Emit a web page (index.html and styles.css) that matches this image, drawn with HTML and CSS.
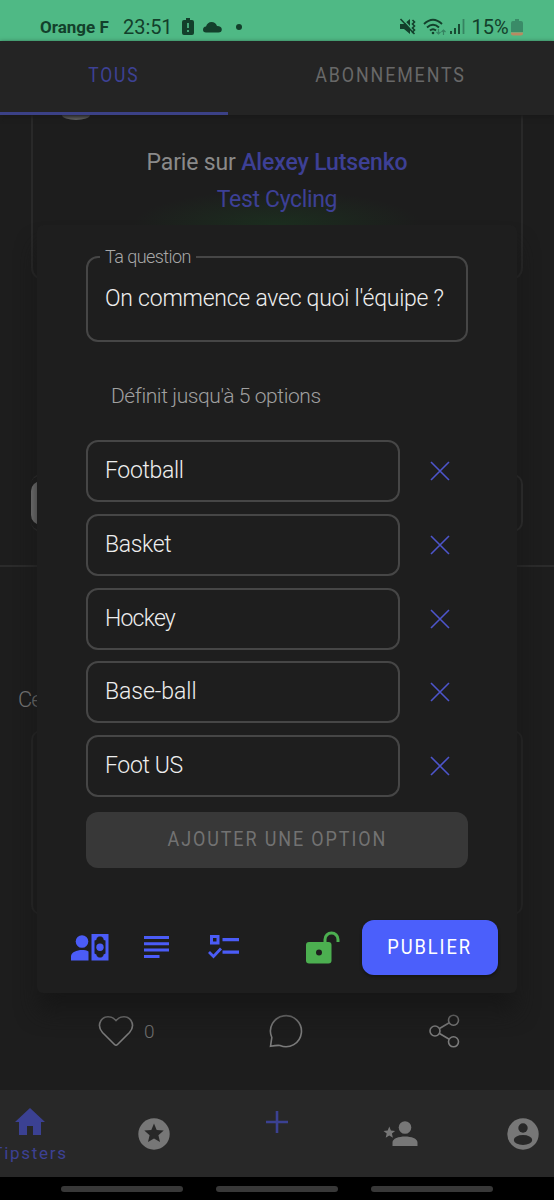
FILE: index.html
```html
<!DOCTYPE html>
<html lang="fr">
<head>
<meta charset="utf-8">
<title>Tipsters</title>
<link rel="stylesheet" href="styles.css">
</head>
<body>
<div class="phone">
  <header class="status">
    <span class="carrier">Orange F</span>
    <span class="clock">23:51</span>
    <svg class="battery-alert" width="12" height="18" viewBox="0 0 12 18"><path d="M4 0h4v2h2q2 0 2 2v11q0 2-2 2H2q-2 0-2-2V4q0-2 2-2h2z" fill="#133f2b"/><path d="M6 5v5M6 12v2" stroke="#4fb985" stroke-width="1.7"/></svg>
    <svg class="cloud" width="19" height="11" viewBox="0 0 19 11"><path d="M3 10.500Q0 10.500 0 7.800 0 5 3 4.600 4.500 0 8.500 0 12.500 0 14 4q4.800.2 4.800 3.600 0 2.900-3.300 2.900z" fill="#133f2b"/></svg>
    <i class="dot"></i>
    <svg class="mute" width="16" height="16" viewBox="0 0 16 16" fill="none" stroke="#133f2b"><path d="M0 5h4l6-5v15l-6-5H0z" fill="#133f2b" stroke="none"/><path d="M1.500-1l13 14" stroke="#4fb985" stroke-width="1.400"/><path d="M.5 0l13 14" stroke-width="1.600"/><path d="M12.500 1l2 2-2 2 2 2-2 2 2 2-2 2 2 2" stroke-width="1.600"/></svg>
    <svg class="wifi" width="23" height="17" viewBox="0 0 23 17" fill="none" stroke="#133f2b" stroke-width="1.900"><path d="M1 5q9-8.500 18 0M4 8.500q6-5.500 12 0M7 11.500q3-2.700 6 0"/><circle cx="10" cy="14" r="1.300" fill="#133f2b" stroke="none"/><path d="M15.500 10v5m-2-2l2 2 2-2M20.500 16v-5m-2 2l2-2 2 2" stroke="#368361" stroke-width="1.200"/></svg>
    <svg class="signal" width="15" height="16" viewBox="0 0 15 16" stroke="#133f2b" stroke-width="1.800"><path d="M1 12v3M5 9v6M9 5v10"/><path d="M13.500 0v15" stroke="#368361"/></svg>
    <span class="percent">15%</span>
    <svg class="battery" width="12" height="17" viewBox="0 0 12 17"><path d="M4 0h4v2h2q2 0 2 2v9H0V4q0-2 2-2h2z" fill="#3a8b68"/><path d="M0 13.500h12v1q0 2-2 2H2q-2 0-2-2z" fill="#b98a62"/></svg>
  </header>
  <nav class="tabs">
    <div class="tab active"><span>TOUS</span></div>
    <div class="tab"><span>ABONNEMENTS</span></div>
  </nav>
  <main class="feed">
    <section class="bet-card">
      <i class="avatar"></i>
      <p class="bet">Parie sur <b>Alexey Lutsenko</b></p>
      <p class="event">Test Cycling</p>
    </section>
    <div class="comment-box"><i class="thumb"></i></div>
    <section class="post">
      <p>Ce</p>
      <div class="post-card"></div>
    </section>
    <div class="reactions">
      <div class="like"><svg width="34" height="31" viewBox="0 0 34 31"><path d="M17 4.500C12-1 5 0 2 4.500-.5 8.500.5 13 3.500 16.500L15.500 28.500Q17 30 18.500 28.500L30.500 16.500C33.500 13 34.500 8.500 32 4.500 29 0 22-1 17 4.500z"/></svg><span>0</span></div>
      <svg class="comment" width="34" height="34" viewBox="0 0 34 34"><path d="M1.500 32.300L2.800 23.500A15.500 15.500 0 1 1 11 31.500Q8.500 31 1.500 32.300z"/></svg>
      <svg width="31" height="34" viewBox="0 0 31 34"><circle cx="6" cy="17" r="5"/><circle cx="24.500" cy="6.200" r="5"/><circle cx="24.500" cy="27.800" r="5"/><path d="M10.500 14.500l9.700-5.700M10.500 19.500l9.700 5.700"/></svg>
    </div>
  </main>
  <nav class="bottom-nav">
    <div class="home"><svg width="30" height="27" viewBox="0 0 30 27"><path d="M15 0L30 14h-4v13h-8v-9h-6v9H4V14H0z"/></svg><span>Tipsters</span></div>
    <svg class="star" width="32" height="32" viewBox="0 0 32 32"><circle cx="16" cy="16" r="15.700"/><path d="M16 5.500l2.700 6.500 7 .6-5.300 4.600 1.600 6.900-6-3.700-6 3.700 1.600-6.900L6.300 12.600l7-.6z" fill="#282828"/></svg>
    <svg class="plus" width="22" height="22" viewBox="0 0 22 22"><path d="M11 0v22M0 11h22" stroke="#3b4192" stroke-width="2.600"/></svg>
    <svg class="follow" width="35" height="26" viewBox="0 0 35 26"><circle cx="22" cy="6.500" r="6.300"/><path d="M9.500 25v-3.500c0-8 25-8 25 0V25zM6.300 5.500l1.600 4 4.200.4-3.200 2.700 1 4.200-3.600-2.300-3.600 2.300 1-4.200L.5 9.900l4.200-.4z"/></svg>
    <svg class="account" width="32" height="32" viewBox="0 0 32 32"><circle cx="16" cy="16" r="15.700"/><circle cx="16" cy="10" r="4.700" fill="#282828"/><ellipse cx="16" cy="22" rx="9.200" ry="5" fill="#282828"/></svg>
  </nav>
  <footer class="gestures"><i></i><i></i><i></i></footer>

  <form class="dialog">
    <fieldset class="question"><legend>Ta question</legend><p>On commence avec quoi l'équipe ?</p></fieldset>
    <p class="hint">Définit jusqu'à 5 options</p>
    <div class="options">
      <div class="option"><div class="field">Football</div><svg width="18" height="18"><path d="M0 0L18 18M18 0L0 18"/></svg></div>
      <div class="option"><div class="field">Basket</div><svg width="18" height="18"><path d="M0 0L18 18M18 0L0 18"/></svg></div>
      <div class="option"><div class="field tight">Hockey</div><svg width="18" height="18"><path d="M0 0L18 18M18 0L0 18"/></svg></div>
      <div class="option"><div class="field wide">Base-ball</div><svg width="18" height="18"><path d="M0 0L18 18M18 0L0 18"/></svg></div>
      <div class="option"><div class="field">Foot US</div><svg width="18" height="18"><path d="M0 0L18 18M18 0L0 18"/></svg></div>
    </div>
    <div class="add"><span>AJOUTER UNE OPTION</span></div>
    <div class="actions">
      <svg class="ic-bet" width="38" height="27" viewBox="0 0 38 27"><circle cx="11" cy="7.500" r="6.300"/><path d="M0 26.500v-4c0-6 12-8 17.500-5v9zM20.500 0h17v26.500h-17z"/><path d="M26 3.500q0 2.500-2.500 3v13q2.500.5 2.500 3 1.500 0 1.500 1h3q0-1 1.500-1 0-2.500 2.500-3v-13q-2.500-.5-2.500-3-1.500 0-1.500-1h-3q0 1-1.500 1z" fill="#1e1e1e"/><circle cx="29" cy="13.300" r="3.700"/></svg>
      <svg class="ic-text" width="25" height="23" viewBox="0 0 25 23"><path d="M0 0h25v3H0zM0 6.200h25v3H0zM0 12.600h25v3H0zM0 19h15.500v3H0z"/></svg>
      <svg class="ic-poll" width="31" height="24" viewBox="0 0 31 24"><path d="M2 0h9.500v9.500H2zm3 3v3.500h3.500V3zM14.500 3H31v3.200H14.500zM14.500 15.500H31v3.200H14.500z" fill-rule="evenodd"/><path d="M1 17l4.500 4.500L13 13.500" fill="none" stroke="#4b5cf7" stroke-width="2.800"/></svg>
      <svg class="ic-lock" width="34" height="33" viewBox="0 0 34 33"><rect x="0" y="11" width="25.500" height="21.500" rx="3"/><circle cx="13" cy="21.500" r="3" fill="#1e1e1e"/><path d="M19 12V8.500a6.500 6.500 0 0 1 13 0V11" fill="none" stroke="#4caf50" stroke-width="3"/></svg>
      <div class="publish"><span>PUBLIER</span></div>
    </div>
  </form>
</div>
</body>
</html>
```
FILE: styles.css
```css
* { box-sizing: border-box; }
body { margin: 0; background: #1e1e1e; font-family: Roboto, "Liberation Sans", sans-serif; font-weight: 300; color: #eee; }
p { margin: 0; white-space: nowrap; }
svg { display: block; flex: none; overflow: visible; }
.phone { position: relative; width: 554px; height: 1200px; overflow: hidden; display: flex; flex-direction: column; }

.status { height: 41px; flex: none; background: #4fb985; color: #133f2b; display: flex; align-items: center; padding: 13px 31px 0 40px; }
.carrier { font-size: 17px; font-weight: 700; width: 84px; letter-spacing: 0; }
.clock { font-size: 20px; font-weight: 400; width: 60px; letter-spacing: -.1px; }
.cloud { margin-left: 9px; }
.dot { width: 6px; height: 6px; border-radius: 50%; background: #133f2b; margin-left: 14px; }
.mute { margin-left: 158px; }
.wifi { margin-left: 7px; }
.signal { margin-left: 4px; }
.percent { font-size: 20px; font-weight: 400; margin-left: 6px; width: 40px; }

.tabs { height: 74px; flex: none; background: #242424; display: flex; box-shadow: 0 2px 5px #191919; z-index: 1; }
.tab { width: 326px; display: flex; align-items: center; justify-content: center; padding-bottom: 7px; font-size: 21px; letter-spacing: 2.2px; color: #686868; font-weight: 400; }
.tab span { transform: scaleX(.85); }
.tab.active { width: 228px; flex: none; color: #3d4194; border-bottom: 3px solid #3b4187; padding-bottom: 4px; }
.tab.active span { transform: scaleX(.83); }

.feed { height: 975px; flex: none; background: #1d1d1d; font-size: 23px; overflow: hidden; }
.bet-card { height: 165px; margin: 0 31px; border: 2px solid #292929; border-top: 0; border-radius: 0 0 12px 12px; text-align: center; background: radial-gradient(ellipse 145px 35px at 50% 110px, #1c2e1f, transparent); display: flex; flex-direction: column; }
.avatar { width: 28px; height: 5px; border-radius: 0 0 50% 50% / 0 0 100% 100%; background: #69696a; margin-left: 29px; }
.bet { margin-top: 24px; height: 37px; line-height: 37px; color: #8a8a8a; font-weight: 400; font-size: 23px; letter-spacing: -.15px; }
.bet b { font-weight: 500; color: #3d4096; }
.event { height: 37px; line-height: 37px; color: #3d4096; font-weight: 400; letter-spacing: -.35px; }
.comment-box { margin: 194px 31px 0; height: 58px; border: 2px solid #303030; border-left: 0; border-radius: 10px; display: flex; align-items: center; }
.thumb { width: 44px; height: 44px; border-radius: 10px; background: #7d7d7d; }
.post { margin-top: 33px; border-top: 2px solid #2b2b2b; padding: 118px 31px 0 18px; color: #777; font-size: 22px; line-height: 30px; letter-spacing: -1px; }
.post-card { margin: 15px 0 0 13px; height: 185px; border: 2px solid #272727; border-radius: 10px; }
.reactions { display: flex; align-items: center; height: 36px; margin-top: 98px; padding: 0 94px 0 99px; justify-content: space-between; }
.reactions svg { fill: none; stroke: #7b7b7b; stroke-width: 1.6; }
.like { display: flex; align-items: center; width: 56px; gap: 11px; font-size: 19px; color: #707070; }
.reactions .comment { margin-right: 12px; }

.bottom-nav { height: 87px; flex: none; background: #282828; fill: #777; display: flex; }
.home { width: 92px; flex: none; margin-left: -16px; padding: 18px 0 0; display: flex; flex-direction: column; align-items: center; fill: #3b4192; color: #3d4194; font-size: 17px; font-weight: 400; letter-spacing: 1.7px; gap: 8px; }
.star { margin: 28px 0 0 62px; }
.plus { margin: 21px 0 0 96px; }
.follow { margin: 31px 0 0 95px; }
.account { margin: 28px 0 0 89px; }
.gestures { height: 23px; flex: none; background: #000; display: flex; gap: 33px; padding: 9px 0 0 61px; }
.gestures i { width: 122px; height: 6px; border-radius: 3px; background: #383838; }

.dialog { position: absolute; z-index: 2; left: 37px; top: 225px; width: 480px; height: 768px; margin: 0; padding: 22px 19px 0 49px; background: #1e1e1e; border-radius: 6px; box-shadow: 0 20px 22px -2px #171717; font-size: 23px; }
.question { width: 382px; height: 95px; margin: 0; padding: 0 17px; border: 2px solid #464646; border-radius: 12px; }
legend { margin-left: -5px; padding: 0 5px; height: 20px; line-height: 20px; font-size: 18px; color: #a8a8a8; white-space: nowrap; letter-spacing: -.55px; }
.question p { line-height: 30px; margin-top: 17px; letter-spacing: -.24px; }
.hint { margin: 39px 0 0 25px; height: 30px; line-height: 30px; font-size: 21px; color: #a0a0a0; letter-spacing: -.4px; }
.options { margin-top: 29px; display: flex; flex-direction: column; gap: 11.8px; }
.option { height: 62px; display: flex; align-items: center; gap: 31px; }
.field { width: 314px; height: 62px; border: 2px solid #464646; border-radius: 12px; padding: 0 17px 1px; display: flex; align-items: center; letter-spacing: -.35px; }
.field.tight { letter-spacing: -.8px; }
.field.wide { letter-spacing: -.05px; }
.option svg { stroke: #4d55cb; stroke-width: 1.6; }
.add { width: 382px; height: 56px; margin-top: 14.800px; border-radius: 12px; background: #383838; color: #727272; font-size: 21px; font-weight: 400; letter-spacing: 2.2px; display: flex; align-items: center; justify-content: center; padding-bottom: 1px; }
.add span { transform: scaleX(.855); white-space: nowrap; }
.actions { display: flex; align-items: center; height: 55px; margin: 52px 0 0 -15px; fill: #4b5cf7; }
.ic-text { margin-left: 35px; }
.ic-poll { margin-left: 39px; }
.ic-lock { margin-left: 67px; fill: #4caf50; }
.publish { margin-left: 22px; width: 136px; flex: none; height: 55px; border-radius: 12px; background: #4b5ffb; box-shadow: 0 2px 3px #151515; color: #fff; font-size: 21px; font-weight: 400; letter-spacing: 2.2px; display: flex; align-items: center; justify-content: center; }
.publish span { transform: scaleX(.87); }
```
